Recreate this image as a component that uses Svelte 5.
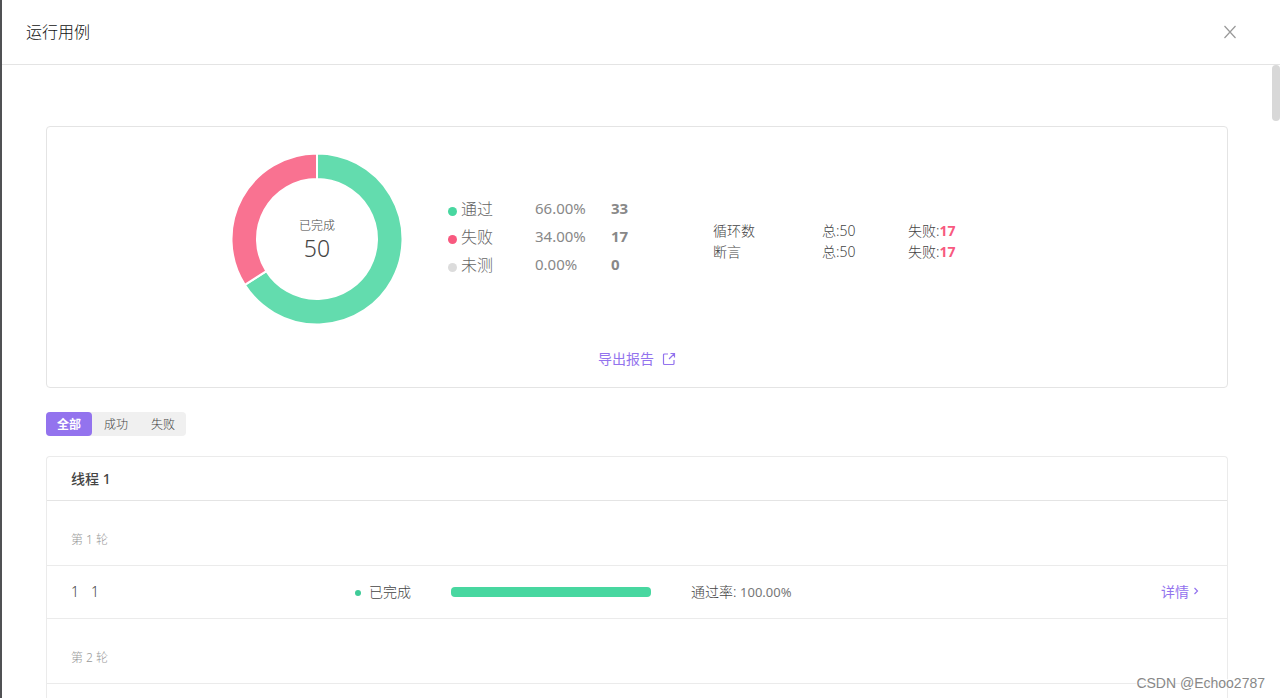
<script>
  const results = [
    { label: '通过', percent: '66.00%', count: 33, type: 'pass' },
    { label: '失败', percent: '34.00%', count: 17, type: 'fail' },
    { label: '未测', percent: '0.00%', count: 0, type: 'none' },
  ];

  const stats = [
    { label: '循环数', total: 50, failed: 17 },
    { label: '断言', total: 50, failed: 17 },
  ];

  const filters = ['全部', '成功', '失败'];
  let active = $state('全部');

  const rounds = [
    { id: 1, cases: [{ index: 1, name: '1', status: '已完成', rate: 100 }] },
    { id: 2, cases: [] },
  ];

  const total = 50;

  // point on a circle around the chart centre, share is 0..1 clockwise from the top
  function point(radius, share) {
    const angle = share * Math.PI * 2;
    return `${86 + radius * Math.sin(angle)} ${86 - radius * Math.cos(angle)}`;
  }

  function slice(from, to) {
    const large = to - from > 0.5 ? 1 : 0;
    return `M${point(85.5, from)} A85.5 85.5 0 ${large} 1 ${point(85.5, to)} L${point(60, to)} A60 60 0 ${large} 0 ${point(60, from)} Z`;
  }
</script>

<div class="drawer">
  <header class="drawer-header">
    <h1>运行用例</h1>
    <button class="close" aria-label="关闭">
      <svg width="14" height="14" viewBox="0 0 14 14">
        <path d="M1.5 1 L12.5 13 M12.5 1 L1.5 13" />
      </svg>
    </button>
  </header>

  <div class="drawer-body">
    <main class="content">
      <section class="summary">
        <div class="summary-row">
          <div class="donut">
            <svg width="172" height="172" viewBox="0 0 172 172">
              <path class="slice pass" d={slice(0, results[0].count / total)} />
              <path class="slice fail" d={slice(results[0].count / total, 1)} />
            </svg>
            <div class="donut-text">
              <span class="donut-label">已完成</span>
              <span class="donut-total">{total}</span>
            </div>
          </div>

          <div class="legend">
            {#each results as item}
              <span class="legend-label"><i class="dot {item.type}"></i>{item.label}</span>
              <span>{item.percent}</span>
              <b>{item.count}</b>
            {/each}
          </div>

          <div class="stats">
            {#each stats as item}
              <span>{item.label}</span>
              <span>总:{item.total}</span>
              <span>失败:<b>{item.failed}</b></span>
            {/each}
          </div>
        </div>

        <a class="export" href="#export">
          导出报告
          <svg width="14" height="14" viewBox="0 0 14 14">
            <path d="M6 2 H2.5 Q1.5 2 1.5 3 V11.5 Q1.5 12.5 2.5 12.5 H11 Q12 12.5 12 11.5 V8 M8.5 1.5 H12.5 V5.5 M12.5 1.5 L7 7" />
          </svg>
        </a>
      </section>

      <div class="filters">
        {#each filters as name}
          <button class:active={active === name} onclick={() => (active = name)}>{name}</button>
        {/each}
      </div>

      <section class="thread">
        <h2>线程 1</h2>
        {#each rounds as round}
          <h3>第 {round.id} 轮</h3>
          {#each round.cases as item}
            <div class="case">
              <span class="case-name"><span>{item.index}</span><span>{item.name}</span></span>
              <span class="status"><i></i>{item.status}</span>
              <div class="bar"><div class="bar-fill" style="width: {item.rate}%"></div></div>
              <span class="rate">通过率: <span class="num">{item.rate.toFixed(2)}%</span></span>
              <a class="detail" href="#detail">
                详情
                <svg width="6" height="8" viewBox="0 0 6 8">
                  <path d="M1.5 1 L4.5 4 L1.5 7" />
                </svg>
              </a>
            </div>
          {/each}
        {/each}
      </section>
    </main>
    <div class="track"><div class="thumb"></div></div>
  </div>

  <div class="watermark">CSDN @Echoo2787</div>
</div>

<style>
  :global(body) {
    background: #fff;
  }
  .drawer {
    position: relative;
    display: flex;
    flex-direction: column;
    box-sizing: border-box;
    height: 100vh;
    overflow: hidden;
    border-left: 2px solid #505154;
    font-family: "Noto Sans", "Noto Sans CJK SC", sans-serif;
    font-size: 14px;
    font-weight: 300;
    color: #444;
  }
  h1, h2, h3 {
    margin: 0;
  }
  button {
    padding: 0;
    border: 0;
    background: none;
    font: inherit;
    color: inherit;
    cursor: pointer;
  }
  a {
    color: #9373ee;
    text-decoration: none;
  }
  svg {
    display: block;
    fill: none;
    stroke: currentColor;
    stroke-width: 1.2;
  }

  .drawer-header {
    display: flex;
    flex: none;
    align-items: center;
    justify-content: space-between;
    height: 64px;
    padding: 0 43px 0 24px;
    border-bottom: 1px solid #e4e4e4;
  }
  h1 {
    font-size: 16px;
    font-weight: 300;
    line-height: 24px;
    color: #111;
  }
  .close {
    color: #999;
  }
  .drawer-body {
    display: flex;
    flex: 1;
    min-height: 0;
  }
  .content {
    display: flex;
    flex: 1;
    flex-direction: column;
    padding: 61px 44px 0;
    overflow: hidden;
  }
  .track {
    width: 8px;
  }
  .thumb {
    height: 56px;
    border-radius: 4px;
    background: #d8d8d8;
  }

  .summary {
    padding: 26px 0 18px;
    border: 1px solid #e4e4e4;
    border-radius: 4px;
  }
  .summary-row {
    display: flex;
    align-items: center;
    padding-left: 184px;
  }
  .donut {
    display: grid;
    place-items: center;
  }
  .donut > * {
    grid-area: 1 / 1;
  }
  .slice {
    stroke: #fff;
    stroke-width: 2;
  }
  .slice.pass {
    fill: #63dcae;
  }
  .slice.fail {
    fill: #f97291;
  }
  .donut-text {
    display: flex;
    flex-direction: column;
    align-items: center;
  }
  .donut-label {
    font-size: 12px;
    line-height: 18px;
  }
  .donut-total {
    font-size: 23px;
    line-height: 26px;
  }

  .legend {
    display: grid;
    grid-template-columns: 87px 76px 102px;
    margin-left: 45px;
    padding-bottom: 6px;
    font-size: 15px;
    font-weight: 400;
    line-height: 28px;
    color: #888;
  }
  .legend b {
    font-weight: 700;
  }
  .legend-label {
    display: flex;
    align-items: center;
    gap: 4px;
    padding-top: 2px;
    font-size: 16px;
    font-weight: 300;
    line-height: 26px;
    color: #666;
  }
  .dot {
    width: 9px;
    height: 9px;
    margin-top: 4px;
    border-radius: 50%;
  }
  .dot.pass {
    background: #48d7a0;
  }
  .dot.fail {
    background: #f8597f;
  }
  .dot.none {
    background: #dcdcdc;
  }
  .stats {
    display: grid;
    grid-template-columns: 109px 86px auto;
    padding-top: 4px;
    line-height: 21px;
  }
  .stats b {
    font-weight: 700;
    color: #f8597f;
  }
  .export {
    display: flex;
    align-items: center;
    justify-content: center;
    gap: 8px;
    margin-top: 23px;
    font-weight: 400;
    line-height: 21px;
  }

  .filters {
    display: flex;
    align-self: flex-start;
    gap: 1px;
    margin: 24px 0 20px;
    border-radius: 4px;
    background: #f0f0f0;
  }
  .filters button {
    padding: 1px 11px 0;
    border-radius: 4px;
    font-size: 12px;
    line-height: 23px;
  }
  .filters .active {
    background: #9373ee;
    color: #fff;
    font-weight: 700;
  }

  .thread {
    flex: 1;
    border: 1px solid #ebebeb;
    border-bottom: 0;
    border-radius: 4px 4px 0 0;
  }
  h2 {
    padding: 0 24px;
    border-bottom: 1px solid #e4e4e4;
    font-size: 14px;
    font-weight: 500;
    line-height: 43px;
  }
  h3 {
    padding: 29px 24px 15px;
    border-bottom: 1px solid #ebebeb;
    font-size: 12px;
    font-weight: 300;
    line-height: 20px;
    color: #999;
  }
  .case {
    display: flex;
    align-items: center;
    height: 50px;
    padding: 0 28px 2px 24px;
    border-bottom: 1px solid #ebebeb;
  }
  .case-name {
    display: flex;
    gap: 12px;
    width: 284px;
  }
  .status {
    display: flex;
    align-items: center;
    gap: 8px;
    width: 96px;
  }
  .status i {
    width: 6px;
    height: 6px;
    margin-top: 4px;
    border-radius: 50%;
    background: #3fcb98;
  }
  .bar {
    width: 200px;
    height: 10px;
    margin: 2px 40px 0 0;
  }
  .bar-fill {
    height: 100%;
    border-radius: 4px;
    background: #48d7a0;
  }
  .num {
    font-size: 13px;
    font-weight: 400;
    color: #777;
  }
  .detail {
    display: flex;
    align-items: center;
    gap: 4px;
    margin-left: auto;
    font-weight: 400;
  }

  .watermark {
    position: absolute;
    right: 15px;
    bottom: 7px;
    font-family: "Liberation Sans", Arial, sans-serif;
    font-size: 14px;
    font-weight: 400;
    line-height: 16px;
    color: #888;
    text-shadow: -1px -1px 0 #fff;
  }
</style>
